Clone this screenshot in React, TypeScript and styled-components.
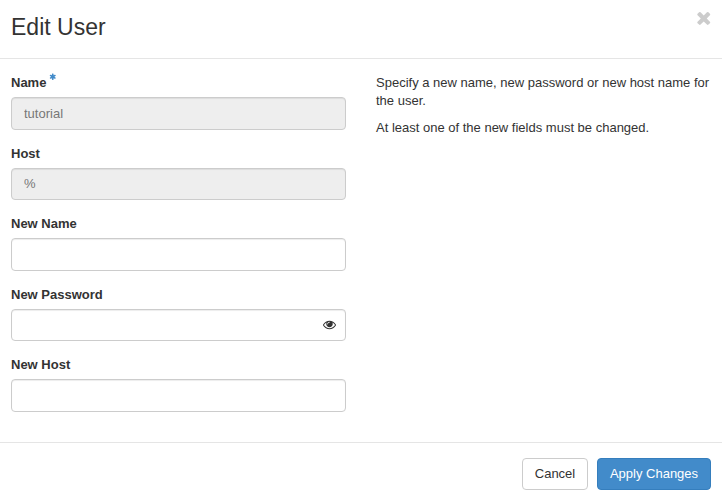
import React from "react";
import styled, { createGlobalStyle } from "styled-components";

const GlobalStyle = createGlobalStyle`
  *, *::before, *::after { box-sizing: border-box; }
  body {
    margin: 0;
    background: #fff;
    color: #333;
    font: 13px/18px "Liberation Sans", Arial, sans-serif;
  }
`;

const Dialog = styled.form`
  display: flex;
  flex-direction: column;
  height: 500px;
  overflow: hidden;
`;

const Header = styled.header`
  display: flex;
  justify-content: space-between;
  align-items: flex-start;
  height: 59px;
  padding: 11px 8.5px 0 11px;
  border-bottom: 1px solid #e5e5e5;
`;

const Title = styled.h1`
  margin: 0;
  font-size: 23px;
  font-weight: 400;
  line-height: 33px;
`;

const CloseButton = styled.button`
  display: flex;
  margin-top: -3px;
  padding: 0;
  border: 0;
  background: none;
  color: #ccc;
`;

const Body = styled.main`
  display: grid;
  grid-template-columns: 335px 335px;
  column-gap: 30px;
  height: 383px;
  padding: 15px 11px 0;
`;

const Field = styled.div`
  height: 70.5px;
`;

const Label = styled.label`
  display: flex;
  height: 23.2px;
  font-weight: 700;
`;

const Required = styled.span`
  display: flex;
  margin: -1px 0 0 3px;
  color: #428bca;
`;

const InputGroup = styled.div`
  display: grid;
  align-items: center;
`;

const Input = styled.input`
  grid-area: 1 / 1;
  width: 100%;
  height: 32.5px;
  margin: 0;
  padding: 6px 12px;
  border: 1px solid #ccc;
  border-radius: 4px;
  outline: 0;
  background: #fff;
  box-shadow: inset 0 1px 1px rgba(0, 0, 0, 0.075);
  color: #555;
  font: inherit;

  &:disabled {
    background: #eee;
    color: #777;
  }
`;

const RevealButton = styled.button`
  grid-area: 1 / 1;
  justify-self: end;
  display: flex;
  margin-right: 10px;
  padding: 0 0 1px;
  border: 0;
  background: none;
  color: #333;
`;

const Help = styled.aside`
  p {
    margin: 0 0 9px;
  }
`;

const Footer = styled.footer`
  display: flex;
  justify-content: flex-end;
  gap: 9px;
  height: 58px;
  padding: 15px 11px 0;
  border-top: 1px solid #e5e5e5;
`;

const Button = styled.button<{ $primary?: boolean }>`
  width: ${(p) => (p.$primary ? 114 : 66)}px;
  height: 32px;
  padding: 0;
  border: 1px solid ${(p) => (p.$primary ? "#357ebd" : "#ccc")};
  border-radius: 4px;
  background: ${(p) => (p.$primary ? "#428bca" : "#fff")};
  color: ${(p) => (p.$primary ? "#fff" : "#333")};
  font: inherit;
`;

const paths = {
  times:
    "M1490 1322q0 40-28 68l-136 136q-28 28-68 28t-68-28l-294-294-294 294q-28 28-68 28t-68-28l-136-136q-28-28-28-68t28-68l294-294-294-294q-28-28-28-68t28-68l136-136q28-28 68-28t68 28l294 294 294-294q28-28 68-28t68 28l136 136q28 28 28 68t-28 68l-294 294 294 294q28 28 28 68z",
  eye: "M1664 960q-152-236-381-353 61 104 61 225 0 185-131.5 316.5t-316.5 131.5-316.5-131.5-131.5-316.5q0-121 61-225-229 117-381 353 133 205 333.5 326.5t434.5 121.5 434.5-121.5 333.5-326.5zm-720-384q0-20-14-34t-34-14q-125 0-214.5 89.5t-89.5 214.5q0 20 14 34t34 14 34-14 14-34q0-86 61-147t147-61q20 0 34-14t14-34zm848 384q0 34-20 69-140 230-376.5 368.5t-499.5 138.5-499.5-139-376.5-368q-20-35-20-69t20-69q140-229 376.5-368t499.5-139 499.5 139 376.5 368q20 35 20 69z",
  asterisk:
    "M1546 1050q46 26 59.5 77.5t-12.5 97.5l-64 110q-26 46-77.5 59.5t-97.5-12.5l-266-153v307q0 52-38 90t-90 38h-128q-52 0-90-38t-38-90v-307l-266 153q-46 26-97.5 12.5t-77.5-59.5l-64-110q-26-46-12.5-97.5t59.5-77.5l266-154-266-154q-46-26-59.5-77.5t12.5-97.5l64-110q26-46 77.5-59.5t97.5 12.5l266 153v-307q0-52 38-90t90-38h128q52 0 90 38t38 90v307l266-153q46-26 97.5-12.5t77.5 59.5l64 110q26 46 12.5 97.5t-59.5 77.5l-266 154z",
};

function Icon({ name, size }: { name: keyof typeof paths; size: number }) {
  return (
    <svg width={size} height={size} viewBox="0 0 1792 1792" fill="currentColor" aria-hidden="true">
      <path d={paths[name]} />
    </svg>
  );
}

const fields = [
  { id: "name", label: "Name", value: "tutorial", disabled: true, required: true },
  { id: "host", label: "Host", value: "%", disabled: true },
  { id: "new-name", label: "New Name" },
  { id: "new-password", label: "New Password", secret: true },
  { id: "new-host", label: "New Host" },
];

export default function App() {
  return (
    <>
      <GlobalStyle />
      <Dialog onSubmit={(e) => e.preventDefault()}>
        <Header>
          <Title>Edit User</Title>
          <CloseButton type="button" aria-label="Close">
            <Icon name="times" size={19.5} />
          </CloseButton>
        </Header>
        <Body>
          <div>
            {fields.map((f) => (
              <Field key={f.id}>
                <Label htmlFor={f.id}>
                  {f.label}
                  {f.required && (
                    <Required>
                      <Icon name="asterisk" size={7.5} />
                    </Required>
                  )}
                </Label>
                <InputGroup>
                  <Input
                    id={f.id}
                    type={f.secret ? "password" : "text"}
                    defaultValue={f.value}
                    disabled={f.disabled}
                  />
                  {f.secret && (
                    <RevealButton type="button" aria-label="Show password">
                      <Icon name="eye" size={13} />
                    </RevealButton>
                  )}
                </InputGroup>
              </Field>
            ))}
          </div>
          <Help>
            <p>Specify a new name, new password or new host name for the user.</p>
            <p>At least one of the new fields must be changed.</p>
          </Help>
        </Body>
        <Footer>
          <Button type="button">Cancel</Button>
          <Button type="submit" $primary>
            Apply Changes
          </Button>
        </Footer>
      </Dialog>
    </>
  );
}
